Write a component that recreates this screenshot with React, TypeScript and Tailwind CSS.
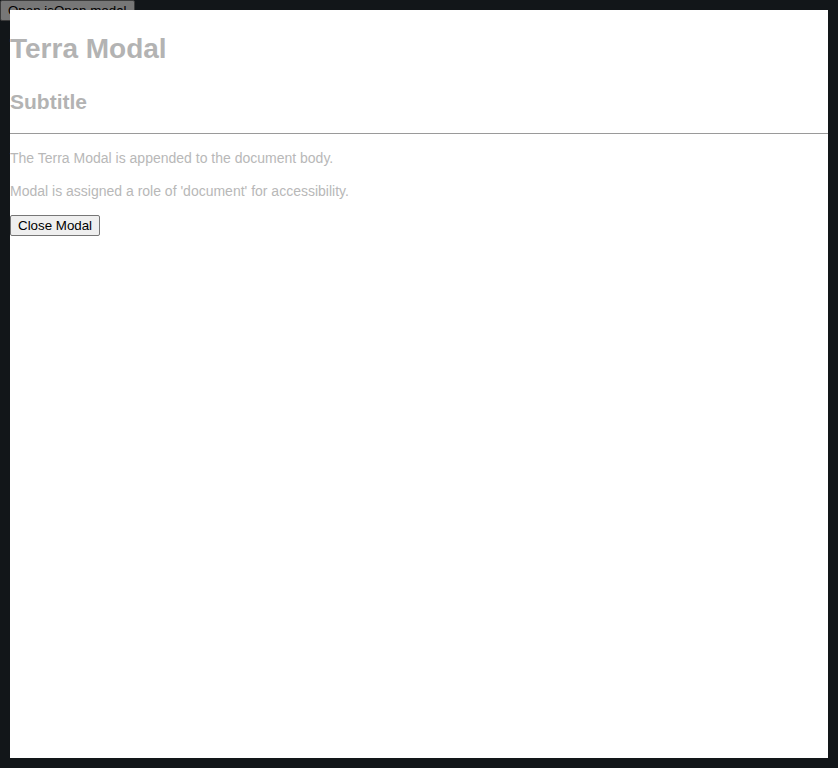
import React from 'react';

const App = () => {
  return (
    <div className="relative w-[838px] h-[768px] bg-[#242c32] overflow-hidden" style={{ fontFamily: '"Liberation Sans", Arial, sans-serif' }}>
      <button className="block bg-[#efefef] border border-[#767676] rounded-[2px] px-[7px] py-[2px] text-[13.33px] leading-[15px] text-black">
        Open isOpen modal
      </button>
      <div className="absolute inset-0 bg-black/50 p-[10px] flex">
        <div role="document" className="flex-1 bg-white flex flex-col items-start">
          <h1 className="mt-[23px] text-[28px] leading-[32px] font-bold text-[#b3b3b3]">Terra Modal</h1>
          <h2 className="mt-[25px] text-[21px] leading-[24px] font-bold text-[#b3b3b3]">Subtitle</h2>
          <hr className="mt-[19px] w-full border-0 border-t border-[#9a9a9a]" />
          <p className="mt-[16px] text-[14px] leading-[16px] text-[#b8b8b8]">The Terra Modal is appended to the document body.</p>
          <p className="mt-[17px] text-[14px] leading-[16px] text-[#b8b8b8]">Modal is assigned a role of 'document' for accessibility.</p>
          <button className="mt-[16px] bg-[#efefef] border border-[#767676] rounded-[2px] px-[7px] py-[2px] text-[13.33px] leading-[15px] text-black">
            Close Modal
          </button>
        </div>
      </div>
    </div>
  );
};

export default App;
